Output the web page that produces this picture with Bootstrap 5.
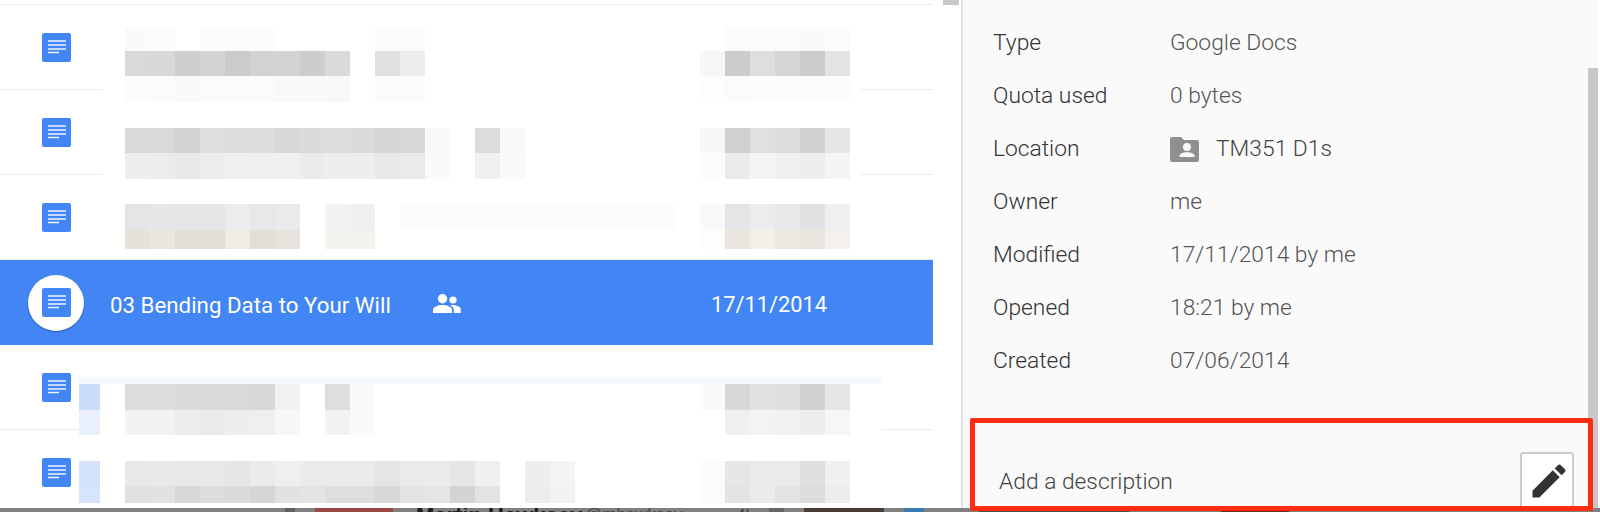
<!DOCTYPE html>
<html lang="en">
<head>
    <meta charset="UTF-8">
    <meta name="viewport" content="width=device-width, initial-scale=1.0">
    <title>Drive details</title>
    <link href="https://cdn.jsdelivr.net/npm/bootstrap@5.3.0/dist/css/bootstrap.min.css" rel="stylesheet">
    <style>
        html, body { height: 100%; overflow: hidden; background: #fff; }
        body { font-family: Roboto, "Liberation Sans", sans-serif; font-weight: 300; }
        .screen { width: 1600px; height: 512px; overflow: hidden; }
        .main-area { height: 508px; overflow: hidden; }

        .file-list { width: 933px; padding-top: 4px; border-top: 0; }
        .list-top-line { height: 1px; background: #ececec; }
        .file-row { height: 85px; border-bottom: 1px solid #ececec; padding-left: 42px; }
        .file-row.picked { background: #4285f4; border-bottom: 0; color: #fff; font-weight: 400; font-size: 22.3px; }
        .doc-icon { width: 29px; height: 29px; display: block; }
        .doc-badge { width: 56px; height: 56px; margin-left: -14px; margin-right: 26px; background: #fff; box-shadow: 0 1px 2px rgba(0,0,0,.3); }
        .file-name { width: 323px; padding-top: 6px; }
        .file-date { margin-left: 250px; padding-top: 6px; font-size: 21.8px; }
        .people-icon { width: 28px; height: 19px; display: block; margin-top: 2px; }
        .mosaic { left: 0; top: 0; }

        .list-scroll { width: 28px; }
        .list-thumb { width: 16px; height: 5px; background: #c8c8c8; margin-left: 10px; }

        .detail-pane { width: 627px; background: #fafafa; border-left: 2px solid #e2e2e2; padding: 17px 14px 0 30px; font-size: 22.8px; color: #555; }
        .detail-row { height: 53px; }
        .detail-key { width: 177px; color: #333; }
        .folder-icon { width: 29px; height: 25px; margin-right: 17px; display: block; }
        .folder-name { color: #444; }
        .desc-row { margin-top: 64px; height: 60px; padding-left: 6px; color: #444; }
        .edit-btn { width: 54px; height: 60px; background: #fff; border: 2px solid #ccc; border-radius: 3px; padding: 0; }
        .edit-btn svg { width: 44px; height: 44px; display: block; margin: 0 0 2px 3px; }
        .pane-scroll { width: 10px; background: #fafafa; }
        .pane-thumb { height: 440px; margin-top: 68px; background: #c8c8c8; }

        .red-frame { left: 970px; top: 418px; width: 623px; height: 93px; border: 5px solid #ff2d0d; border-radius: 2px; pointer-events: none; }

        .back-strip { height: 4px; overflow: hidden; background: #808080; white-space: nowrap; }
        .strip-gap-1 { width: 285px; }
        .strip-dark { width: 10px; background: #5f5f5f; }
        .strip-gap-2 { width: 20px; }
        .strip-red { width: 78px; background: #9c4a46; margin-right: 23px; }
        .strip-name { font-family: "Liberation Sans", sans-serif; font-weight: 700; font-size: 22px; line-height: 26px; margin-top: -5px; color: #1b1b1b; width: 169px; }
        .strip-handle { font-family: "Liberation Sans", sans-serif; font-weight: 400; font-size: 17px; line-height: 20px; margin-top: -3px; color: #444; width: 151px; }
        .strip-age { font-size: 17px; line-height: 20px; margin-top: -3px; color: #444; width: 33px; font-weight: 400; }
        .strip-mid { width: 15px; background: #666; margin-right: 20px; }
        .strip-brown { width: 80px; background: #4a3b36; margin-right: 20px; }
        .strip-blue { width: 20px; background: #3b7bb5; margin-right: 55px; }
        .strip-dark-2 { width: 150px; background: #4a4a4a; }
        .strip-brick { width: 68px; background: #6e2f22; margin-left: 92px; }
    </style>
</head>
<body>
    <svg width="0" height="0" class="d-block position-absolute">
        <symbol id="docGlyph" viewBox="0 0 29 29">
            <rect width="29" height="29" rx="2" fill="#4285f4"/>
            <path d="M6 8h18M6 12h18M6 16h18M6 19.5h11" stroke="#fff" stroke-width="1.6" opacity=".92"/>
        </symbol>
    </svg>

    <div class="screen position-relative d-flex flex-column">
        <div class="main-area d-flex">
            <div class="file-list position-relative flex-shrink-0">
                <div class="list-top-line"></div>
                <div class="file-row d-flex align-items-center"><svg class="doc-icon"><use href="#docGlyph"/></svg></div>
                <div class="file-row d-flex align-items-center"><svg class="doc-icon"><use href="#docGlyph"/></svg></div>
                <div class="file-row d-flex align-items-center"><svg class="doc-icon"><use href="#docGlyph"/></svg></div>
                <div class="file-row picked d-flex align-items-center">
                    <div class="doc-badge rounded-circle d-flex align-items-center justify-content-center flex-shrink-0">
                        <svg class="doc-icon"><use href="#docGlyph"/></svg>
                    </div>
                    <span class="file-name">03 Bending Data to Your Will</span>
                    <svg class="people-icon" viewBox="0 0 28 19" fill="#fff">
                        <circle cx="9.5" cy="4.7" r="4.7"/>
                        <circle cx="20" cy="6" r="3.6"/>
                        <path d="M0 19v-3c0-3 5-5 9.5-5s9.500 2 9.500 5v3z"/>
                        <path d="M17 11.200c4-.9 10.800 .8 10.800 4.300V19h-7v-3.500c0-1.700-1.500-3.300-3.800-4.300z"/>
                    </svg>
                    <span class="file-date">17/11/2014</span>
                </div>
                <div class="file-row d-flex align-items-center"><svg class="doc-icon"><use href="#docGlyph"/></svg></div>
                <div class="file-row d-flex align-items-center"><svg class="doc-icon"><use href="#docGlyph"/></svg></div>
                <svg id="mosaic" class="mosaic position-absolute" width="933" height="508" shape-rendering="crispEdges"></svg>
            </div>

            <div class="list-scroll flex-shrink-0"><div class="list-thumb"></div></div>

            <div class="detail-pane flex-shrink-0 overflow-hidden">
                <div class="detail-row d-flex align-items-center"><span class="detail-key">Type</span><span>Google Docs</span></div>
                <div class="detail-row d-flex align-items-center"><span class="detail-key">Quota used</span><span>0 bytes</span></div>
                <div class="detail-row d-flex align-items-center">
                    <span class="detail-key">Location</span>
                    <svg class="folder-icon" viewBox="0 0 29 25">
                        <path d="M2 0h9l3 3h13a2 2 0 0 1 2 2v18a2 2 0 0 1-2 2H2a2 2 0 0 1-2-2V2a2 2 0 0 1 2-2z" fill="#8f8f8f"/>
                        <circle cx="17" cy="10" r="4" fill="#fafafa"/>
                        <path d="M9.500 20v-1.500c0-2 4-3.300 7.500-3.300s7.500 1.300 7.500 3.300V20z" fill="#fafafa"/>
                    </svg>
                    <span class="folder-name">TM351 D1s</span>
                </div>
                <div class="detail-row d-flex align-items-center"><span class="detail-key">Owner</span><span>me</span></div>
                <div class="detail-row d-flex align-items-center"><span class="detail-key">Modified</span><span>17/11/2014 by me</span></div>
                <div class="detail-row d-flex align-items-center"><span class="detail-key">Opened</span><span>18:21 by me</span></div>
                <div class="detail-row d-flex align-items-center"><span class="detail-key">Created</span><span>07/06/2014</span></div>
                <div class="desc-row d-flex align-items-center justify-content-between">
                    <span>Add a description</span>
                    <button type="button" class="edit-btn btn d-flex align-items-center justify-content-center" aria-label="Edit description">
                        <svg viewBox="0 0 24 24" fill="#333"><path d="M3 17.250V21h3.750L17.810 9.940l-3.750-3.750L3 17.250zM20.710 7.040c.39-.39.39-1.020 0-1.410l-2.340-2.340c-.39-.39-1.020-.39-1.410 0l-1.830 1.830 3.750 3.750 1.830-1.830z"/></svg>
                    </button>
                </div>
            </div>

            <div class="pane-scroll flex-shrink-0"><div class="pane-thumb"></div></div>
        </div>

        <div class="back-strip d-flex">
            <div class="strip-gap-1"></div>
            <div class="strip-dark"></div>
            <div class="strip-gap-2"></div>
            <div class="strip-red"></div>
            <div class="strip-name">Martin Hawksey</div>
            <div class="strip-handle">@mhawksey</div>
            <div class="strip-age">4h</div>
            <div class="strip-mid"></div>
            <div class="strip-brown"></div>
            <div class="strip-blue"></div>
            <div class="strip-dark-2"></div>
            <div class="strip-brick"></div>
        </div>

        <div class="red-frame position-absolute"></div>
    </div>

    <script src="https://cdn.jsdelivr.net/npm/bootstrap@5.3.0/dist/js/bootstrap.bundle.min.js"></script>
    <script>
        // white patches under the pixelated file names
        const patches = [
            [103, 28, 758, 221, '#ffffff'],
            [103, 51, 22, 198, '#fffffd'],
            [79, 378, 802, 125, '#ffffff'],
            [79, 378, 802, 6, '#f3f8fe'],
            [79, 384, 21, 26, '#c9ddfb'],
            [79, 410, 21, 25, '#eaf1fd'],
            [79, 461, 21, 25, '#d4e3fb'],
            [79, 486, 21, 17, '#d6e5fc'],
            [100, 384, 25, 119, '#fffffd'],
            [400, 204, 275, 26, '#fcfcfe']
        ];

        // y, height, then runs of [first x, colours...], cells are 25px wide
        const mosaicRows = [
            [28, 23, [125, 'fafafa', 'fcfcfc', 'ffffff', 'fcfcfc', 'fcfcfc', 'fcfcfc'], [375, 'fbfbfb', 'fbfbfb'], [725, 'fbfbfb', 'fbfbfb', 'fbfbfb', 'fafafa', 'fbfbfb']],
            [51, 25, [125, 'd8d9da', 'd8d8d8', 'cecece', 'd3d3d3', 'cbcbcb', 'd2d2d2', 'd3d3d3', 'cdcdcd', 'dadada'], [375, 'e0e0e0', 'ededed'], [700, 'f7f7f7', 'cbcbcb', 'dedede', 'd6d6d6', 'cccccc', 'e3e3e3']],
            [76, 26, [125, 'fcfcfc', 'fbfbfb', 'f9f9f9', 'fbfbfb', 'fbfbfb', 'fbfbfb', 'f9f9f9', 'f9f9f9', 'f8f8f8'], [375, 'fbfbfb', 'fbfbfb'], [700, 'fdfdfd', 'fbfbfb', 'fcfcfc', 'fcfcfc', 'fcfcfc', 'fcfcfc']],
            [128, 25, [125, 'd9dadb', 'd9d9d9', 'd3d3d3', 'dedede', 'dcdcdc', 'dddddd', 'd8d8d8', 'dbdbdb', 'dcdcdc', 'dbdbdb', 'd6d6d6', 'd8d8d8', 'f8f8f8', 'ffffff', 'dcdcdc', 'f9f9f9'], [700, 'f7f7f7', 'd0d0d0', 'e0e0e0', 'dcdcdc', 'd0d0d0', 'e6e6e6']],
            [153, 26, [125, 'eeeeee', 'ececec', 'e8e8e8', 'ececec', 'efefef', 'efefef', 'efefef', 'ebebeb', 'eeeeee', 'eeeeee', 'e8e8e8', 'ebebeb', 'fafafa', 'ffffff', 'f0f0f0', 'fafafa'], [700, 'fbfbfb', 'ebebeb', 'f4f4f4', 'f0f0f0', 'eeeeee', 'f5f5f5']],
            [204, 26, [125, 'e4e5e6', 'e6e7e8', 'e5e6e7', 'e5e6e7', 'ebecee', 'e7e8ea', 'e9eaec', 'ffffff', 'f1f2f4', 'eff0f2'], [700, 'f9f9fb', 'e4e5e7', 'ebecee', 'e7e8ea', 'e1e2e4', 'eeeff1']],
            [230, 19, [125, 'e5e2dc', 'e9e6e0', 'e2ddd6', 'e2ddd6', 'efece5', 'e3ded7', 'e7e3dc', 'ffffff', 'f4f2ed', 'f4f2ed'], [700, 'fefdfb', 'ebe6e0', 'f3f0ea', 'ede8e2', 'e9e4de', 'f4f1ec']],
            [384, 26, [125, 'dddddd', 'dddddd', 'dbdad9', 'dcdbda', 'dbdad9', 'd9d8d7', 'f2f1ef', 'ffffff', 'dfdedc', 'fafafa'], [700, 'fafafa', 'd9d8d7', 'e3e2e1', 'dfdedd', 'd2d1cf', 'e8e7e5']],
            [410, 25, [125, 'f1f2f2', 'f1f2f2', 'ececec', 'ebebeb', 'eeeeee', 'eef0ef', 'f7f7f7', 'ffffff', 'f1f2f2', 'fafafa'], [725, 'eff0f0', 'f3f3f3', 'f1f1f1', 'eeeeee', 'f5f6f6']],
            [461, 25, [125, 'e8e8e8', 'e9e9e9', 'e8e8e8', 'e8e8e8', 'e5e5e5', 'ebebeb', 'efefef', 'ebebeb', 'ebebeb', 'ebebeb', 'e5e5e5', 'ebebeb', 'ebebeb', 'e5e5e5', 'f0f0f0'], [525, 'eeeeee', 'f4f4f4'], [700, 'fbfbfb', 'e6e6e6', 'eaeaea', 'eaeaea', 'dfdfdf', 'f0f0f0']],
            [486, 17, [125, 'e0e0e0', 'e2e2e2', 'd8d8d8', 'dddddd', 'dbdbdb', 'd6d6d6', 'e2e2e2', 'e4e4e4', 'dedede', 'dedede', 'd8d8d8', 'e3e3e3', 'e6e6e6', 'd4d4d4', 'e3e3e3'], [525, 'ececec', 'f2f2f2'], [700, 'fbfbfb', 'e3e3e3', 'ebebeb', 'e3e3e3', 'dcdcdc', 'ececec']]
        ];

        const mosaic = document.getElementById('mosaic');

        function addRect(x, y, w, h, fill) {
            const r = document.createElementNS('http://www.w3.org/2000/svg', 'rect');
            r.setAttribute('x', x);
            r.setAttribute('y', y);
            r.setAttribute('width', w);
            r.setAttribute('height', h);
            r.setAttribute('fill', fill);
            mosaic.appendChild(r);
        }

        patches.forEach(p => addRect(p[0], p[1], p[2], p[3], p[4]));
        mosaicRows.forEach(row => {
            row.slice(2).forEach(run => {
                run.slice(1).forEach((c, i) => addRect(run[0] + i * 25, row[0], 25, row[1], '#' + c));
            });
        });
    </script>
</body>
</html>
